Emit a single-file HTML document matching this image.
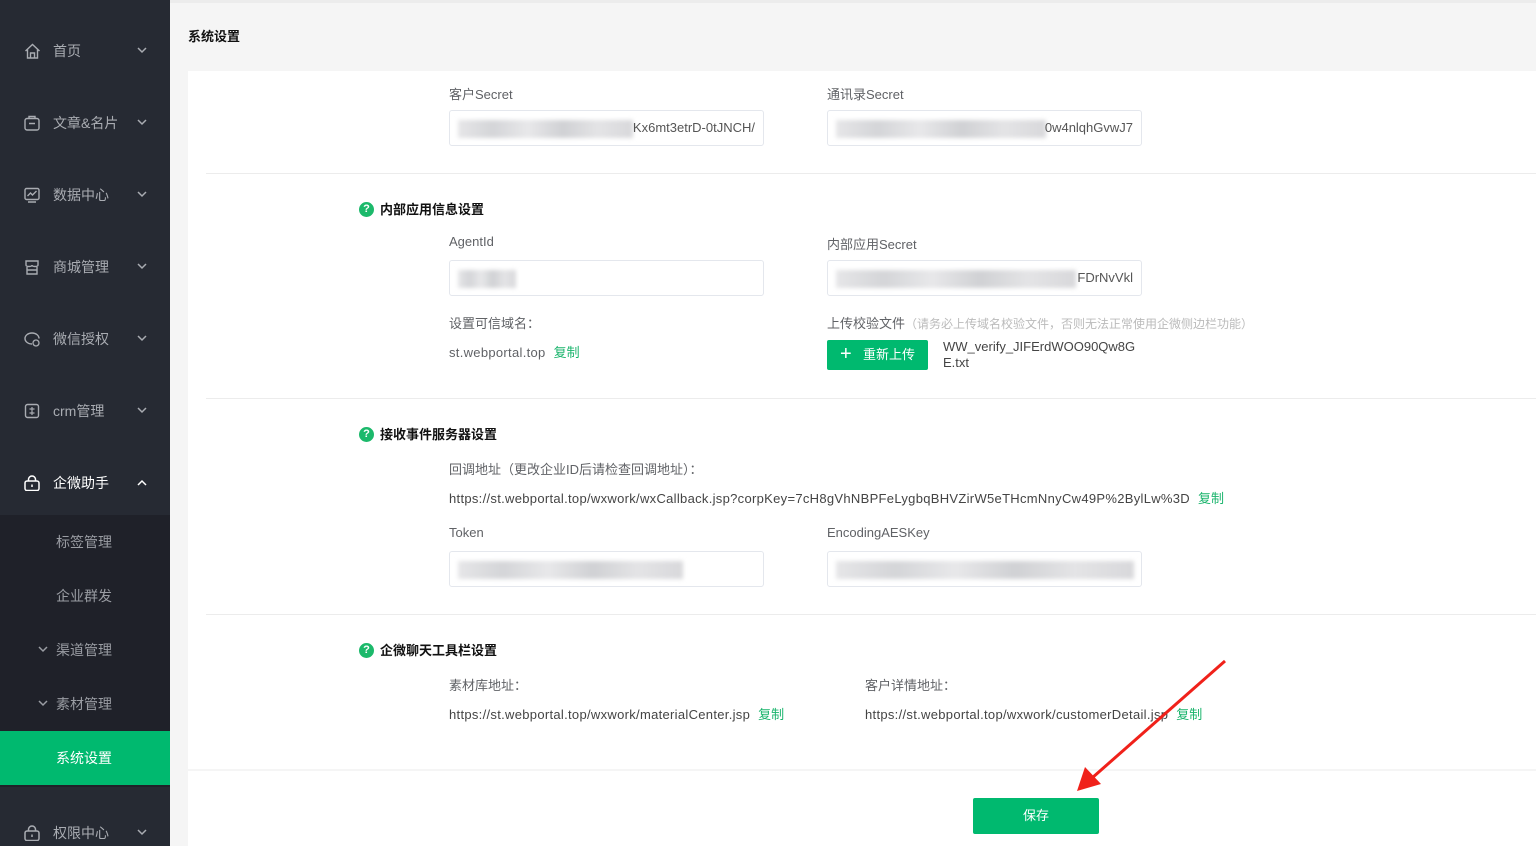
<!DOCTYPE html>
<html><head><meta charset="utf-8"><style>
*{margin:0;padding:0;box-sizing:border-box}
html{height:846px;overflow:hidden}
body{width:1536px;height:846px;overflow:hidden;background:#f5f5f5;font-family:"Liberation Sans","Noto Sans CJK SC",sans-serif;position:relative;font-size:13px;color:#555}
.a{position:absolute;white-space:nowrap}
#side{position:absolute;left:0;top:0;width:170px;height:846px;background:#262a33}
.mi{position:absolute;left:0;width:170px;height:72px;color:#a9acb2;font-size:14px}
.mi svg.ic{position:absolute;left:24px;top:50%;margin-top:-8px}
.mi span{position:absolute;left:53px;top:50%;transform:translateY(-50%)}
.mi svg.ch{position:absolute;left:137px;top:50%;margin-top:-4px}
.sub{position:absolute;left:0;width:170px;height:54px;color:#9a9da3;font-size:14px}
.sub span{position:absolute;left:56px;top:50%;transform:translateY(-50%)}
.lab{color:#606266;font-size:13px}
.url{letter-spacing:0.3px}
.inp{position:absolute;width:315px;height:36px;border:1px solid #e4e7ed;border-radius:3px;background:#fff;overflow:hidden}
.blur{position:absolute;top:9px;height:18px;background:linear-gradient(90deg,#e6e6e8,#d4d5d8,#e8e8ea,#d0d1d4,#e4e4e6,#d8d8db);filter:blur(2px)}
.inp .t{position:absolute;right:8px;top:9px;font-size:13px;color:#555}
.hr{position:absolute;left:206px;right:0;height:1px;background:#ececec}
.sec{position:absolute;font-size:13px;font-weight:bold;color:#111}
.sec i{position:absolute;left:-21px;top:3px;width:15px;height:15px;border-radius:50%;background:#1cb96b;color:#fff;font-style:normal;font-size:11px;text-align:center;line-height:15px}
.cp{color:#1ab46c;margin-left:8px;letter-spacing:0}
</style></head><body>
<div class="a" style="left:170px;top:0;right:0;height:3px;background:#ececec"></div>
<div id="side">
<div class="mi" style="top:15px"><svg class="ic" width="17" height="16" viewBox="0 0 17 16"><path d="M1.5 8L8.5 1.5 15.5 8M3.5 6.5V15H13.5V6.5M6.5 15V10H10.5V15" fill="none" stroke="#a9acb2" stroke-width="1.4"/></svg><span>首页</span><svg class="ch" width="10" height="7"><path d="M1 1l4 4 4-4" fill="none" stroke="#a9acb2" stroke-width="1.5"/></svg></div>
<div class="mi" style="top:87px"><svg class="ic" width="16" height="16" viewBox="0 0 16 16"><rect x="1" y="3.5" width="14" height="11.5" rx="2" fill="none" stroke="#a9acb2" stroke-width="1.4"/><path d="M5 3.5V1.5h6v2M5 8.5h6" stroke="#a9acb2" stroke-width="1.4" fill="none"/></svg><span>文章&amp;名片</span><svg class="ch" width="10" height="7"><path d="M1 1l4 4 4-4" fill="none" stroke="#a9acb2" stroke-width="1.5"/></svg></div>
<div class="mi" style="top:159px"><svg class="ic" width="16" height="16" viewBox="0 0 16 16"><rect x="1" y="1.5" width="14" height="11" rx="1.5" fill="none" stroke="#a9acb2" stroke-width="1.4"/><path d="M3.5 9l3-3 2 2 4-4M4 15h8" stroke="#a9acb2" stroke-width="1.4" fill="none"/></svg><span>数据中心</span><svg class="ch" width="10" height="7"><path d="M1 1l4 4 4-4" fill="none" stroke="#a9acb2" stroke-width="1.5"/></svg></div>
<div class="mi" style="top:231px"><svg class="ic" width="16" height="16" viewBox="0 0 16 16"><path d="M2 6V2h12v4c0 2-6 2-6 0 0 2-6 2-6 0zM3 8v7h10V8M3 11h10" fill="none" stroke="#a9acb2" stroke-width="1.4"/></svg><span>商城管理</span><svg class="ch" width="10" height="7"><path d="M1 1l4 4 4-4" fill="none" stroke="#a9acb2" stroke-width="1.5"/></svg></div>
<div class="mi" style="top:303px"><svg class="ic" width="16" height="16" viewBox="0 0 16 16"><path d="M8 13c-4 0-7-2.5-7-5.5S4 2 8 2s7 2.5 7 5.5" fill="none" stroke="#a9acb2" stroke-width="1.4"/><circle cx="12" cy="12" r="3" fill="none" stroke="#a9acb2" stroke-width="1.3"/></svg><span>微信授权</span><svg class="ch" width="10" height="7"><path d="M1 1l4 4 4-4" fill="none" stroke="#a9acb2" stroke-width="1.5"/></svg></div>
<div class="mi" style="top:375px"><svg class="ic" width="16" height="16" viewBox="0 0 16 16"><rect x="1.5" y="1.5" width="13" height="13" rx="2" fill="none" stroke="#a9acb2" stroke-width="1.4"/><path d="M8 4v8M5.5 6h5M5.5 10h5" stroke="#a9acb2" stroke-width="1.2"/></svg><span>crm管理</span><svg class="ch" width="10" height="7"><path d="M1 1l4 4 4-4" fill="none" stroke="#a9acb2" stroke-width="1.5"/></svg></div>
<div class="mi" style="top:447px;color:#fff"><svg class="ic" width="16" height="16" viewBox="0 0 16 16"><rect x="1" y="6" width="14" height="9.5" rx="2" fill="none" stroke="#fff" stroke-width="1.5"/><path d="M4.5 6V4.5a3.5 3.5 0 0 1 7 0V6M8 9.5v2.5" fill="none" stroke="#fff" stroke-width="1.5"/></svg><span>企微助手</span><svg class="ch" width="10" height="7"><path d="M1 6l4-4 4 4" fill="none" stroke="#fff" stroke-width="1.5"/></svg></div>
<div class="a" style="left:0;top:515px;width:170px;height:272px;background:#1f2129"></div>
<div class="sub" style="top:515px"><span>标签管理</span></div>
<div class="sub" style="top:569px"><span>企业群发</span></div>
<div class="sub" style="top:623px"><svg style="position:absolute;left:38px;top:23px" width="10" height="7"><path d="M1 1l4 4 4-4" fill="none" stroke="#9a9da3" stroke-width="1.5"/></svg><span>渠道管理</span></div>
<div class="sub" style="top:677px"><svg style="position:absolute;left:38px;top:23px" width="10" height="7"><path d="M1 1l4 4 4-4" fill="none" stroke="#9a9da3" stroke-width="1.5"/></svg><span>素材管理</span></div>
<div class="sub" style="top:731px;background:#00b96f;color:#fff"><span>系统设置</span></div>
<div class="mi" style="top:797px"><svg class="ic" width="16" height="16" viewBox="0 0 16 16"><rect x="1" y="6" width="14" height="9.5" rx="2" fill="none" stroke="#a9acb2" stroke-width="1.5"/><path d="M4.5 6V4.5a3.5 3.5 0 0 1 7 0V6M8 9.5v2.5" fill="none" stroke="#a9acb2" stroke-width="1.5"/></svg><span>权限中心</span><svg class="ch" width="10" height="7"><path d="M1 1l4 4 4-4" fill="none" stroke="#a9acb2" stroke-width="1.5"/></svg></div>
</div>
<div class="a" style="left:188px;top:26px;font-size:13px;font-weight:bold;color:#111">系统设置</div>
<div class="a" style="left:188px;top:71px;right:0;height:698px;background:#fff"></div>
<div class="a" style="left:188px;top:771px;right:0;height:75px;background:#fff"></div>

<div class="a lab" style="left:449px;top:84px">客户Secret</div>
<div class="inp" style="left:449px;top:110px"><div class="blur" style="left:8px;width:175px"></div><div class="t">Kx6mt3etrD-0tJNCH/</div></div>
<div class="a lab" style="left:827px;top:84px">通讯录Secret</div>
<div class="inp" style="left:827px;top:110px"><div class="blur" style="left:8px;width:210px"></div><div class="t">0w4nlqhGvwJ7</div></div>
<div class="hr" style="top:173px"></div>

<div class="sec" style="left:380px;top:199px"><i>?</i>内部应用信息设置</div>
<div class="a lab" style="left:449px;top:234px">AgentId</div>
<div class="inp" style="left:449px;top:260px"><div class="blur" style="left:8px;width:58px"></div></div>
<div class="a lab" style="left:827px;top:234px">内部应用Secret</div>
<div class="inp" style="left:827px;top:260px"><div class="blur" style="left:8px;width:240px"></div><div class="t">FDrNvVkl</div></div>
<div class="a lab" style="left:449px;top:313px">设置可信域名：</div>
<div class="a lab url" style="left:449px;top:342px">st.webportal.top<span class="cp">复制</span></div>
<div class="a lab" style="left:827px;top:313px">上传校验文件<span style="color:#bbb;font-size:12px">（请务必上传域名校验文件，否则无法正常使用企微侧边栏功能）</span></div>
<div class="a" style="left:827px;top:340px;width:101px;height:30px;background:#00b96f;border-radius:2px;color:#fff;font-size:13px;line-height:30px"><span style="position:absolute;left:13px;top:-1px;font-size:20px">+</span><span style="position:absolute;left:36px">重新上传</span></div>
<div class="a lab" style="left:943px;top:339px;line-height:16px;color:#444">WW_verify_JIFErdWOO90Qw8G<br>E.txt</div>
<div class="hr" style="top:398px"></div>

<div class="sec" style="left:380px;top:424px"><i>?</i>接收事件服务器设置</div>
<div class="a lab" style="left:449px;top:459px">回调地址（更改企业ID后请检查回调地址）：</div>
<div class="a lab url" style="left:449px;top:488px;color:#444">https://st.webportal.top/wxwork/wxCallback.jsp?corpKey=7cH8gVhNBPFeLygbqBHVZirW5eTHcmNnyCw49P%2BylLw%3D<span class="cp">复制</span></div>
<div class="a lab" style="left:449px;top:525px">Token</div>
<div class="inp" style="left:449px;top:551px"><div class="blur" style="left:8px;width:225px"></div></div>
<div class="a lab" style="left:827px;top:525px">EncodingAESKey</div>
<div class="inp" style="left:827px;top:551px"><div class="blur" style="left:8px;width:298px"></div></div>
<div class="hr" style="top:614px"></div>

<div class="sec" style="left:380px;top:640px"><i>?</i>企微聊天工具栏设置</div>
<div class="a lab" style="left:449px;top:675px">素材库地址：</div>
<div class="a lab url" style="left:449px;top:704px;color:#444">https://st.webportal.top/wxwork/materialCenter.jsp<span class="cp">复制</span></div>
<div class="a lab" style="left:865px;top:675px">客户详情地址：</div>
<div class="a lab url" style="left:865px;top:704px;color:#444">https://st.webportal.top/wxwork/customerDetail.jsp<span class="cp">复制</span></div>

<div class="a" style="left:973px;top:798px;width:126px;height:36px;background:#00b96f;border-radius:2px;color:#fff;text-align:center;line-height:36px;font-size:13px">保存</div>
<svg class="a" style="left:0;top:0" width="1536" height="846"><line x1="1225" y1="661" x2="1092" y2="778" stroke="#f0211a" stroke-width="3"/><polygon points="1077,791 1085,767 1101,784" fill="#f0211a"/></svg>
</body></html>
